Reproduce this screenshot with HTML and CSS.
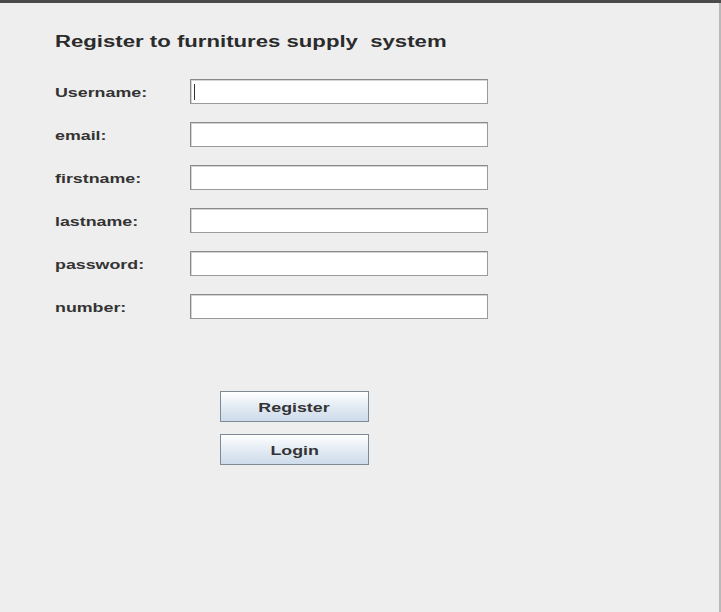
FILE: index.html
```html
<!DOCTYPE html>
<html>
<head>
<meta charset="utf-8">
<link rel="stylesheet" href="styles.css">
</head>
<body>
<div class="topbar"></div>
<div class="window">
  <h1 class="title"><span class="wide">Register to furnitures supply&nbsp; system</span></h1>
  <div class="form">
    <div class="row"><span class="label"><span class="wide">Username:</span></span><div class="field"><span class="caret"></span></div></div>
    <div class="row"><span class="label"><span class="wide">email:</span></span><div class="field"></div></div>
    <div class="row"><span class="label"><span class="wide">firstname:</span></span><div class="field"></div></div>
    <div class="row"><span class="label"><span class="wide">lastname:</span></span><div class="field"></div></div>
    <div class="row"><span class="label"><span class="wide">password:</span></span><div class="field"></div></div>
    <div class="row"><span class="label"><span class="wide">number:</span></span><div class="field"></div></div>
  </div>
  <div class="buttons">
    <div class="btn"><span class="wide center">Register</span></div>
    <div class="btn"><span class="wide center">Login</span></div>
  </div>
</div>
</body>
</html>
```
FILE: styles.css
```css
html, body {
  margin: 0;
  padding: 0;
  background: #eeeeee;
  width: 721px;
  height: 612px;
  overflow: hidden;
}
body {
  font-family: "Liberation Sans", Arial, sans-serif;
  color: #333333;
}
.topbar {
  height: 3px;
  background: #4a4a4a;
}
.window {
  height: 609px;
  box-sizing: border-box;
  border-right: 2px solid #b9b9b9;
  padding-left: 55px;
  padding-top: 29px;
}
.wide {
  display: inline-block;
  white-space: nowrap;
  transform: scaleX(1.37);
  transform-origin: left center;
}
.wide.center {
  transform-origin: center center;
}
.title {
  margin: 0;
  font-size: 16px;
  font-weight: bold;
  line-height: 20px;
  color: #2b2b2b;
}
.title .wide {
  transform: scaleX(1.385);
}
.form {
  margin-top: 27px;
  display: flex;
  flex-direction: column;
  gap: 18px;
}
.row {
  display: flex;
  align-items: center;
  height: 25px;
}
.label {
  width: 135px;
  font-size: 13px;
  font-weight: bold;
  color: #333333;
  padding-top: 1px;
}
.field {
  width: 298px;
  height: 25px;
  box-sizing: border-box;
  background: #ffffff;
  border: 1px solid #9a9a9a;
  border-top-color: #8a8a8a;
  border-left-color: #8a8a8a;
  box-shadow: inset 1px 1px 0 #d4d4d4;
  position: relative;
}
.caret {
  position: absolute;
  left: 3px;
  top: 4px;
  width: 1px;
  height: 16px;
  background: #333;
}
.buttons {
  margin-top: 72px;
  margin-left: 165px;
  display: flex;
  flex-direction: column;
  gap: 12px;
}
.btn {
  width: 149px;
  height: 31px;
  box-sizing: border-box;
  border: 1px solid #7d8a96;
  background: linear-gradient(#ffffff, #e6edf5 45%, #cddbea);
  font-size: 13px;
  font-weight: bold;
  color: #333333;
  display: flex;
  align-items: center;
  justify-content: center;
  padding-top: 1px;
}
```
